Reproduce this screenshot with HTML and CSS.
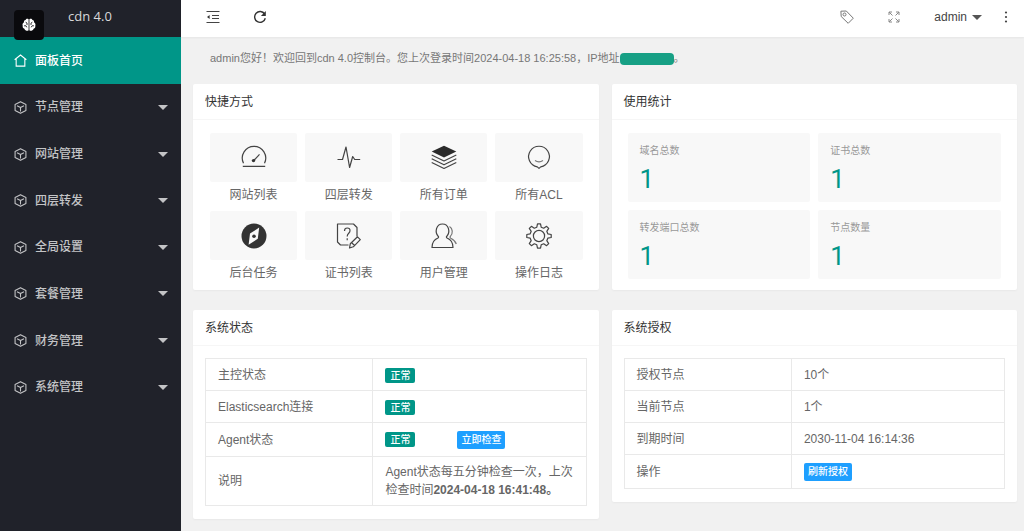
FILE: index.html
```html
<!DOCTYPE html>
<html lang="zh-CN">
<head>
<meta charset="utf-8">
<title>cdn 4.0</title>
<link rel="stylesheet" href="styles.css">
</head>
<body>
<svg class="defs" aria-hidden="true">
  <symbol id="cube" viewBox="0 0 12 12"><path d="M6 .6 11 3.200v5.600L6 11.400 1 8.800V3.200zM2.800 4.300 6 6l3.200-1.700M6 6v3.600" fill="none" stroke="currentColor" stroke-linejoin="round"/></symbol>
</svg>
<div class="app">
  <aside class="sidebar">
    <div class="brand">
      <span class="logo"><svg viewBox="0 0 14 14" width="14" height="14"><path d="M6.600 1.200C5.300.2 3.900.9 3.600 2 2.300 2.100 1.700 3.200 2 4.200.7 4.900.2 6.400.7 7.700c-.3 1.500.4 2.700 1.700 3C3 12.600 5.400 13.500 6.600 12.300zM7.400 1.200c1.300-1 2.700-.3 3 .8 1.300.1 1.900 1.200 1.600 2.200 1.300.7 1.800 2.200 1.300 3.500.3 1.500-.4 2.700-1.700 3-.6 1.900-3 2.800-4.200 1.600z" fill="#fff"/><path d="M3.600 4.200 5 5v2M2 7.800h2l.8 1.500M10.400 4.200 9 5v2M12 7.800h-2l-.8 1.500" fill="none" stroke="#0a0a0d" stroke-width=".8"/></svg></span>
      <span class="brand-name">cdn 4.0</span>
    </div>
    <nav class="menu">
      <a class="menu-item active" href="#"><svg class="menu-icon" viewBox="0 0 12 12"><path d="M.6 5.300 6 .9l5.400 4.400M2 4.600v6.600h8V4.600" fill="none" stroke="currentColor"/></svg><span>面板首页</span></a>
      <a class="menu-item" href="#"><svg class="menu-icon"><use href="#cube"/></svg><span>节点管理</span><i class="caret"></i></a>
      <a class="menu-item" href="#"><svg class="menu-icon"><use href="#cube"/></svg><span>网站管理</span><i class="caret"></i></a>
      <a class="menu-item" href="#"><svg class="menu-icon"><use href="#cube"/></svg><span>四层转发</span><i class="caret"></i></a>
      <a class="menu-item" href="#"><svg class="menu-icon"><use href="#cube"/></svg><span>全局设置</span><i class="caret"></i></a>
      <a class="menu-item" href="#"><svg class="menu-icon"><use href="#cube"/></svg><span>套餐管理</span><i class="caret"></i></a>
      <a class="menu-item" href="#"><svg class="menu-icon"><use href="#cube"/></svg><span>财务管理</span><i class="caret"></i></a>
      <a class="menu-item" href="#"><svg class="menu-icon"><use href="#cube"/></svg><span>系统管理</span><i class="caret"></i></a>
    </nav>
  </aside>
  <div class="main">
    <header class="topbar">
      <div class="tools">
        <button class="tool" aria-label="收起菜单"><svg viewBox="0 0 14 14" width="14" height="14"><path d="M.5 1.500h13M6 5.500h7M6 8.500h7M.5 12.500h13" stroke="#444" stroke-width="1.200" fill="none"/><path d="M1 7l2.600-2v4z" fill="#333"/></svg></button>
        <button class="tool" aria-label="刷新"><svg viewBox="0 0 14 14" width="14" height="14"><path d="M11.600 4A5.400 5.400 0 1 0 12.300 8.300" stroke="#333" stroke-width="1.400" fill="none"/><path d="M12.800 1v5H7.900z" fill="#333"/></svg></button>
      </div>
      <div class="tools right">
        <button class="tool" aria-label="标签"><svg viewBox="0 0 14 14" width="14" height="14"><path d="M.9 1.200 6.300 1l7 7.200-5.100 5.100L1.200 6.500z" stroke="#777" fill="none" stroke-linejoin="round"/><circle cx="4.500" cy="4.500" r="1.500" stroke="#777" fill="none"/></svg></button>
        <button class="tool" aria-label="全屏"><svg viewBox="0 0 12 12" width="12" height="12"><path d="M1 4V1h3M1 1l3.500 3.500M8 1h3v3M11 1 7.500 4.500M1 8v3h3M1 11l3.500-3.500M8 11h3V8M11 11 7.500 7.500" stroke="#888" fill="none"/></svg></button>
        <button class="tool user">admin<i class="caret dark"></i></button>
        <button class="tool" aria-label="更多"><svg viewBox="0 0 4 12" width="4" height="12"><g fill="#444"><circle cx="2" cy="1.500" r="1.100"/><circle cx="2" cy="6" r="1.100"/><circle cx="2" cy="10.500" r="1.100"/></g></svg></button>
      </div>
    </header>
    <main class="content">
      <p class="welcome">admin您好！欢迎回到cdn 4.0控制台。您上次登录时间2024-04-18 16:25:58，IP地址<span class="redacted"></span>。</p>
      <div class="cards">
        <section class="card">
          <h2>快捷方式</h2>
          <div class="shortcuts">
            <a href="#"><span class="tile"><svg viewBox="0 0 26 26"><path d="M2.500 18.200A11.700 11.700 0 1 1 23.500 18.200M1.800 21.400h22.400" class="ln"/><path d="m12.300 16 6.200-6.600" class="ln"/><circle cx="12.500" cy="15.600" r="1.700" fill="#333"/></svg></span>网站列表</a>
            <a href="#"><span class="tile"><svg viewBox="0 0 26 26"><path d="M1.500 14.500h5L10 2l3.600 20.500 3.100-11 2 3h5.500" class="ln"/></svg></span>四层转发</a>
            <a href="#"><span class="tile"><svg viewBox="0 0 26 26"><path d="m13 .8 12.300 5.700L13 12.500.7 6.500z" fill="#2b2b2b"/><path d="m.7 10 12.300 6 12.300-6M.7 13.800l12.300 6 12.300-6M.7 17.500l12.300 6 12.300-6" class="ln"/></svg></span>所有订单</a>
            <a href="#"><span class="tile"><svg viewBox="0 0 26 26"><path d="M13 23.400 11.300 21.900A10.400 10.400 0 1 1 14.700 21.900z" class="ln"/><path d="M9 15.500q4 2.600 8 0" class="ln thin"/></svg></span>所有ACL</a>
            <a href="#"><span class="tile"><svg viewBox="0 0 26 26"><circle cx="13" cy="13" r="12.500" fill="#333"/><path d="m18.200 4.600-1.400 11.200-9.200 6L9 10.600z" fill="#f8f8f8"/><circle cx="13" cy="13.200" r="1.800" fill="#333"/></svg></span>后台任务</a>
            <a href="#"><span class="tile"><svg viewBox="0 0 26 26"><path d="M12.500 22H4.500L1.500 19V1h16l3.500 3.500v9" class="ln"/><path d="M8.500 8q0-3 2.800-3T14 7.800c0 2.500-2.800 2.500-2.800 5.600M11.200 15.200v2" class="ln"/><path d="m13.500 25 .8-4.200 7.200-7 2.800 2.800-7 7.200zM16 20l2.500 2.500" class="ln"/></svg></span>证书列表</a>
            <a href="#"><span class="tile"><svg viewBox="0 0 26 26"><path d="M1 24.500c0-6 2.200-8 6-9.500q1.200-.8 0-2C3.800 9.500 4.800 1 11.500 1s7.700 8.500 4.500 12q-1.200 1.200 0 2c3.800 1.500 6 3.500 6 9.500z" class="ln"/><path d="M18.500 3.500c3.500 2 3.500 7 1 9.700q-1 1.300.3 2.100c3.200 1.700 4.700 3.300 5.500 5.700" class="ln thin"/></svg></span>用户管理</a>
            <a href="#"><span class="tile"><svg viewBox="0 0 26 26"><path d="M10.800 4.200 11.500.8h3l.7 3.400 2.500 1 2.900-1.900 2.100 2.100-1.900 2.900 1 2.500 3.400.7v3l-3.400.7-1 2.500 1.900 2.900-2.100 2.100-2.900-1.900-2.500 1-.7 3.400h-3l-.7-3.400-2.500-1-2.900 1.900-2.100-2.100 1.900-2.900-1-2.500-3.400-.7v-3l3.400-.7 1-2.500-1.900-2.900 2.100-2.100 2.900 1.900z" class="ln"/><circle cx="13" cy="13" r="5.600" class="ln"/></svg></span>操作日志</a>
          </div>
        </section>
        <section class="card">
          <h2>使用统计</h2>
          <div class="stats">
            <div class="stat"><h3>域名总数</h3><p>1</p></div>
            <div class="stat"><h3>证书总数</h3><p>1</p></div>
            <div class="stat"><h3>转发端口总数</h3><p>1</p></div>
            <div class="stat"><h3>节点数量</h3><p>1</p></div>
          </div>
        </section>
        <section class="card">
          <h2>系统状态</h2>
          <div class="card-body">
            <table>
              <tr><th scope="row">主控状态</th><td><span class="badge">正常</span></td></tr>
              <tr><th scope="row">Elasticsearch连接</th><td><span class="badge">正常</span></td></tr>
              <tr><th scope="row">Agent状态</th><td><span class="line"><span class="badge">正常</span><button class="btn">立即检查</button></span></td></tr>
              <tr><th scope="row">说明</th><td>Agent状态每五分钟检查一次，上次检查时间<b>2024-04-18 16:41:48。</b></td></tr>
            </table>
          </div>
        </section>
        <section class="card">
          <h2>系统授权</h2>
          <div class="card-body">
            <table>
              <tr><th scope="row">授权节点</th><td>10个</td></tr>
              <tr><th scope="row">当前节点</th><td>1个</td></tr>
              <tr><th scope="row">到期时间</th><td>2030-11-04 16:14:36</td></tr>
              <tr><th scope="row">操作</th><td><span class="line"><button class="btn">刷新授权</button></span></td></tr>
            </table>
          </div>
        </section>
      </div>
    </main>
  </div>
</div>
</body>
</html>
```
FILE: styles.css
```css
* { box-sizing: border-box; margin: 0; padding: 0; }
body {
  font: 12px/18px "Liberation Sans", "Noto Sans CJK SC", sans-serif;
  color: #666;
  background: #f1f1f1;
}
a { color: inherit; text-decoration: none; }
button { font: inherit; color: inherit; border: 0; background: none; cursor: pointer; }
.defs { position: absolute; width: 0; height: 0; }

.app { display: flex; min-height: 100vh; }
.sidebar { flex: 0 0 181px; background: #20222a; color: #c3c4c6; }
.brand { height: 37px; display: flex; padding-left: 14px; gap: 24px; }
.logo {
  position: relative;
  z-index: 1;
  width: 30px;
  height: 30px;
  margin-top: 10px;
  border-radius: 4px;
  background: #0a0a0d;
  display: flex;
  align-items: center;
  justify-content: center;
}
.brand-name { font: 13px/32px "Open Sans", sans-serif; color: #d8d8da; }
.menu { display: grid; grid-template-rows: repeat(8, 1fr); height: 373px; }
.menu-item { display: flex; align-items: center; gap: 8px; padding: 1px 13px 0 14px; font-weight: 500; }
.menu-item.active { background: #009688; color: #fff; }
.menu-icon { width: 13px; height: 13px; flex: none; }
.caret {
  margin-left: auto;
  border: 5px solid transparent;
  border-top-color: #c3c4c6;
  border-bottom: 0;
}
.caret.dark { margin-left: 5px; border-top-color: #555; }

.main { flex: 1; min-width: 0; }
.topbar {
  display: flex;
  justify-content: space-between;
  height: 37px;
  padding: 0 16px 3px 25px;
  background: #fff;
  box-shadow: 0 1px 2px rgba(0, 0, 0, .05);
}
.tools { display: flex; align-items: center; gap: 33px; }
.tool { display: flex; align-items: center; }
.user { color: #444; }
.tools.right { gap: 34px; }
.tools.right .tool:last-child { margin-left: -12px; }

.content { padding: 12px 7px 12px 12px; }
.welcome { padding: 0 17px; font-size: 11px; color: #777; }
.redacted {
  display: inline-block;
  width: 54px;
  height: 12px;
  border-radius: 4px;
  background: #17a085;
  vertical-align: middle;
}
.cards {
  display: grid;
  grid-template-columns: 1fr 1fr;
  align-items: start;
  gap: 20px 13px;
  margin-top: 17px;
}
.card { background: #fff; border-radius: 2px; box-shadow: 0 1px 2px rgba(0, 0, 0, .04); }
.card h2 {
  padding: 2px 12px 0;
  font-size: 12px;
  font-weight: 400;
  line-height: 33px;
  color: #333;
  border-bottom: 1px solid #f6f6f6;
}
.card-body { padding: 12px 12px 13px; }

.shortcuts { display: grid; grid-template-columns: repeat(4, 1fr); gap: 2px 8px; padding: 13px 16px 3px 17px; }
.shortcuts a { text-align: center; line-height: 27px; }
.tile { display: flex; align-items: center; justify-content: center; height: 49px; background: #f8f8f8; border-radius: 2px; }
.tile svg { width: 26px; height: 26px; }
.ln { fill: none; stroke: #444; stroke-width: 1.2; stroke-linejoin: round; }
.ln.thin { stroke: #777; }

.stats { display: grid; grid-template-columns: 1fr 1fr; gap: 8px; padding: 13px 16px 11px; }
.stat { height: 69px; padding: 9px 12px; background: #f8f8f8; border-radius: 2px; }
.stat h3 { font-size: 10px; font-weight: 400; color: #999; }
.stat p { font: 26px/38px Roboto, sans-serif; color: #009688; }

table { width: 100%; border-collapse: collapse; table-layout: fixed; }
th, td { height: 32px; padding: 6px 12px; border: 1px solid #e9e9e9; text-align: left; font-weight: 400; }
th { width: 44%; }
.line { display: flex; align-items: center; gap: 42px; height: 21px; }
.badge {
  display: inline-block;
  width: 30px;
  border-radius: 2px;
  background: #009688;
  color: #fff;
  font-size: 10px;
  font-weight: 500;
  line-height: 15px;
  text-align: center;
}
.btn { padding: 0 4px; border-radius: 2px; background: #1e9fff; color: #fff; font-size: 10px; font-weight: 500; line-height: 18px; }
```
